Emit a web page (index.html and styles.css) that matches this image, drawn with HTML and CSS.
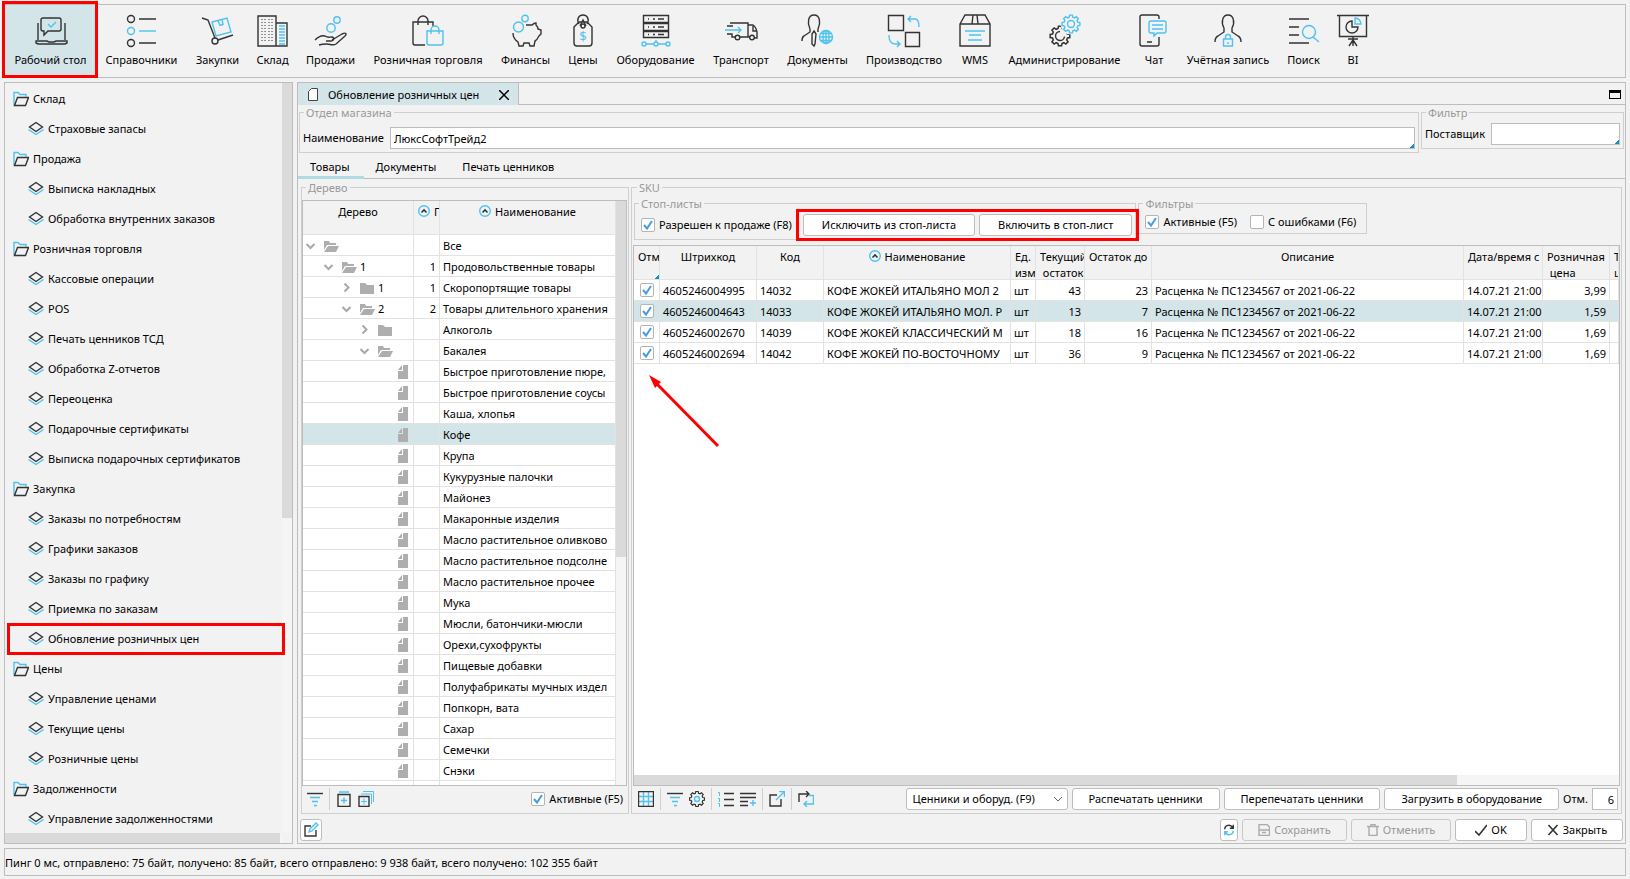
FILE: index.html
```html
<!DOCTYPE html>
<html lang="ru">
<head>
<meta charset="utf-8">
<title>Обновление розничных цен</title>
<link rel="stylesheet" href="styles.css">
</head>
<body>
<svg class="defs" aria-hidden="true">
  <symbol id="folder" viewBox="0 0 16 16"><path class="b" d="M1 14V1.500h4l2 2h6v2"/><path class="k" d="M4.500 6.500h11l-3 8h-11z"/></symbol>
  <symbol id="layers" viewBox="0 0 16 16"><path class="k" d="M8 1.500l6.500 4.500L8 10.500 1.500 6z"/><path class="b" d="M.500 8.500l7.500 5 7.500-5"/></symbol>
  <symbol id="fopen" viewBox="0 0 16 16"><path class="g" d="M1 3h5l1 2h6v2H4l-3 5zM5 8h11l-3 6H1z"/></symbol>
  <symbol id="fclosed" viewBox="0 0 16 16"><path class="g" d="M1 3h5l2 2h7v9H1z"/></symbol>
  <symbol id="file" viewBox="0 0 10 14"><path class="g" d="M5 0h5v14H0V6h5zM4 0v5H0z"/></symbol>
  <symbol id="down" viewBox="0 0 15 15"><path class="gs" d="M3.500 6l4 4 4-4"/></symbol>
  <symbol id="right" viewBox="0 0 15 15"><path class="gs" d="M5.500 3.500l4 4-4 4"/></symbol>
  <symbol id="sort" viewBox="0 0 12 12"><circle class="b" cx="6" cy="6" r="5.300"/><path class="k2" d="M3.500 7.500L6 5l2.500 2.500"/></symbol>
  <symbol id="filter" viewBox="0 0 16 16"><path class="k" d="M0 2.500h16"/><path class="b" d="M3 6.500h10M5 10.500h6M7 14.500h3"/></symbol>
  <g id="gear"><path d="M6.800-1.800L8.900-1.400V1.400L6.800 1.800 6.100 3.500 7.300 5.300 5.300 7.300 3.500 6.100 1.800 6.800 1.400 8.900H-1.400L-1.800 6.800-3.500 6.100-5.300 7.300-7.300 5.300-6.100 3.500-6.800 1.800-8.900 1.400V-1.400L-6.800-1.800-6.100-3.500-7.300-5.300-5.300-7.300-3.500-6.100-1.800-6.800-1.400-8.900H1.400L1.800-6.800 3.500-6.100 5.300-7.300 7.300-5.300 6.100-3.500z"/></g>
</svg>
<div class="app">
  <nav class="toolbar" aria-label="Разделы">
    <button class="tool selected"><svg viewBox="0 0 34 34"><path class="k" d="M4 9v17M31 9v17M9 4h16a2 2 0 0 1 2 2v9a2 2 0 0 1-2 2H14l-4 4v-4H9a2 2 0 0 1-2-2V6a2 2 0 0 1 2-2zM2 27h11l2 1h5l2-1h11v2l-2 1H4l-2-1z"/><path class="b" d="M14 10l3 3 5-5"/></svg><span>Рабочий стол</span><i class="mark"></i></button>
    <button class="tool"><svg viewBox="0 0 34 34"><circle class="k" cx="6" cy="5" r="3.500"/><circle class="b" cx="6" cy="17" r="3.500"/><circle class="k" cx="6" cy="29" r="3.500"/><path class="k" d="M14 5h17M14 29h17"/><path class="b" d="M14 17h17"/></svg><span>Справочники</span></button>
    <button class="tool"><svg viewBox="0 0 34 34"><path class="k" d="M1 4l6 2 7 18M17 26l15-5"/><circle class="k" cx="14" cy="27" r="3"/><path class="b" d="M11 8l15-4 4 14-15 4zM17 6.500l2 5 3-1-1-5"/></svg><span>Закупки</span></button>
    <button class="tool"><svg viewBox="0 0 34 34"><path class="k" d="M2 2h18v30H2zM20 9h11v23H20"/><path class="k dots" d="M6 5v24M9 5v24M13 5v24M16 5v24"/><path class="b" d="M23 12h6M23 15h6M23 18h6M23 21h6M23 24h6M23 27h6M23 30h6"/></svg><span>Склад</span></button>
    <button class="tool"><svg viewBox="0 0 34 34"><circle class="b" cx="23" cy="6" r="3.200"/><circle class="b" cx="17" cy="14" r="4.200"/><path class="k" d="M1 26c4-4 7-5 10-4 3 2 4 1 7 1 3 1 2 4-1 4h-5M18 26l10-6c4-2 5 0 3 2l-9 8c-3 2-6 0-9 0-3 0-5 0-8 1"/></svg><span>Продажи</span></button>
    <button class="tool"><svg viewBox="0 0 34 34"><path class="k" d="M14 31H4a2 2 0 0 1-2-2V8h20v4M7 11V7a4.500 4.500 0 0 1 10 0v4"/><path class="b" d="M16 17h16v12a2 2 0 0 1-2 2H18a2 2 0 0 1-2-2zM20 20v-4a4 4 0 0 1 8 0v4"/></svg><span>Розничная торговля</span></button>
    <button class="tool"><svg viewBox="0 0 34 34"><circle class="b" cx="16" cy="4.500" r="3.200"/><circle class="b" cx="9.500" cy="13" r="5"/><path class="k" d="M4 19c0 5 2 7 5 9l1 4h4l1-3h5l1 3h4l1-5c2-1 3-3 4-5l2-2v-4l-3-1c0-2-1-3-2-4v-2c-1 0-3 1-4 2h-6"/></svg><span>Финансы</span></button>
    <button class="tool"><svg viewBox="0 0 34 34"><path class="k" d="M8 13l5-5h8l5 5v16a3 3 0 0 1-3 3H11a3 3 0 0 1-3-3zM13 10c-3-5 0-9 4-9s7 4 4 9M14 12l3-6 3 6"/><circle class="k" cx="17" cy="12" r="2"/><text class="dollar" x="17" y="27">$</text></svg><span>Цены</span></button>
    <button class="tool"><svg viewBox="0 0 34 34"><path class="k" d="M4.500 1.500h25v7h-25zM4.500 9.500h25v7h-25zM4.500 17.500h25v6h-25zM9 5h1M14 5h2M19 5h6M9 13h1M14 13h2M19 13h6M9 20.500h1M14 20.500h2M19 20.500h6"/><path class="b" d="M7 30h8M19 30h8M17 26v2"/><circle class="b" cx="5" cy="30" r="2"/><circle class="b" cx="17" cy="30" r="2"/><circle class="b" cx="29" cy="30" r="2"/></svg><span>Оборудование</span></button>
    <button class="tool"><svg viewBox="0 0 34 34"><path class="k" d="M6 9h18v14h-8M3 12h6M3 20h5v3h3M24 11h5q3 2 4 7v6h-3M24 23h2M29 12v5h4"/><path class="b" d="M1 16h16M14 13l3 3-3 3"/><circle class="k" cx="13.500" cy="23.500" r="2.300"/><circle class="k" cx="28" cy="23.500" r="2.300"/></svg><span>Транспорт</span></button>
    <button class="tool"><svg viewBox="0 0 34 34"><path class="k" d="M9 15c-3-6-2-14 4-14s7 8 4 14v3M9 15v3l-6 4c-2 1-2 3-2 5M13 17l2 3-1 10-1 2-2-2V20z"/><circle class="b" cx="25" cy="23" r="6.500"/><path class="b" d="M18.500 23h13M25 16.500v13M20 19.500h10M20 26.500h10"/><ellipse class="b" cx="25" cy="23" rx="3" ry="6.500"/></svg><span>Документы</span></button>
    <button class="tool"><svg viewBox="0 0 34 34"><path class="k" d="M1.500 1.500h15v15h-15zM18.500 18.500h14v14h-14z"/><path class="b" d="M21 5h7q4 0 4 8M24 2l-3 3 3 3M2 21q0 9 6 9h5M10 27l3 3-3 3"/></svg><span>Производство</span></button>
    <button class="tool"><svg viewBox="0 0 34 34"><path class="k" d="M2 10l5-9h20l5 9v22H2zM2 10h30M15 1l-1 9M19 1l1 9"/><path class="b" d="M7 17h20M11 21h12M10 26h14"/></svg><span>WMS</span></button>
    <button class="tool"><svg viewBox="0 0 34 34"><use href="#gear" class="k" transform="translate(12 22) scale(1.100)"/><path class="k" d="M12 17.500a4.500 4.500 0 1 0 4.500 5"/><circle class="cut" cx="23" cy="10" r="10.500"/><use href="#gear" class="b" transform="translate(23 10)"/><circle class="b" cx="23" cy="10" r="3.500"/></svg><span>Администрирование</span></button>
    <button class="tool"><svg viewBox="0 0 34 34"><path class="k" d="M22 5V3a2 2 0 0 0-2-2H5a2 2 0 0 0-2 2v27a2 2 0 0 0 2 2h15a2 2 0 0 0 2-2v-7M10 28h5"/><path class="b" d="M14 7h13a2 2 0 0 1 2 2v8a2 2 0 0 1-2 2h-7l-3 3v-3h-3a2 2 0 0 1-2-2V9a2 2 0 0 1 2-2zM15 11h11M15 15h11"/></svg><span>Чат</span></button>
    <button class="tool"><svg viewBox="0 0 34 34"><path class="k" d="M13 14c-3-5-2-13 4-13s7 8 4 13v4l6 4c2 1 3 3 3 6M13 14v4l-6 4c-2 1-3 3-3 6"/><path class="b" d="M12.500 25h9v7h-9zM14.500 25v-2a2.500 2.500 0 0 1 5 0v2M17 28v2"/></svg><span>Учётная запись</span></button>
    <button class="tool"><svg viewBox="0 0 34 34"><path class="k" d="M2 5h20M2 13h10M2 21h10M2 29h20"/><circle class="b" cx="22" cy="18" r="6.500"/><path class="b" d="M26 23l6 5"/></svg><span>Поиск</span></button>
    <button class="tool"><svg viewBox="0 0 34 34"><path class="k" d="M1 1.500h32M3.500 2v20.500h27V2M17 23v9M12 25h10M17 26l-4 6M17 26l4 6M16 7a6 6 0 1 0 6 6h-6z"/><path class="b" d="M19 4v6h6a6 6 0 0 0-6-6z"/></svg><span>BI</span></button>
  </nav>

  <div class="workspace">
    <aside class="side">
      <ul class="nav">
        <li class="group"><a href="#"><svg><use href="#folder"/></svg>Склад</a></li>
        <li><a href="#"><svg><use href="#layers"/></svg>Страховые запасы</a></li>
        <li class="group"><a href="#"><svg><use href="#folder"/></svg>Продажа</a></li>
        <li><a href="#"><svg><use href="#layers"/></svg>Выписка накладных</a></li>
        <li><a href="#"><svg><use href="#layers"/></svg>Обработка внутренних заказов</a></li>
        <li class="group"><a href="#"><svg><use href="#folder"/></svg>Розничная торговля</a></li>
        <li><a href="#"><svg><use href="#layers"/></svg>Кассовые операции</a></li>
        <li><a href="#"><svg><use href="#layers"/></svg>POS</a></li>
        <li><a href="#"><svg><use href="#layers"/></svg>Печать ценников ТСД</a></li>
        <li><a href="#"><svg><use href="#layers"/></svg>Обработка Z-отчетов</a></li>
        <li><a href="#"><svg><use href="#layers"/></svg>Переоценка</a></li>
        <li><a href="#"><svg><use href="#layers"/></svg>Подарочные сертификаты</a></li>
        <li><a href="#"><svg><use href="#layers"/></svg>Выписка подарочных сертификатов</a></li>
        <li class="group"><a href="#"><svg><use href="#folder"/></svg>Закупка</a></li>
        <li><a href="#"><svg><use href="#layers"/></svg>Заказы по потребностям</a></li>
        <li><a href="#"><svg><use href="#layers"/></svg>Графики заказов</a></li>
        <li><a href="#"><svg><use href="#layers"/></svg>Заказы по графику</a></li>
        <li><a href="#"><svg><use href="#layers"/></svg>Приемка по заказам</a></li>
        <li><a href="#"><svg><use href="#layers"/></svg>Обновление розничных цен</a><i class="mark"></i></li>
        <li class="group"><a href="#"><svg><use href="#folder"/></svg>Цены</a></li>
        <li><a href="#"><svg><use href="#layers"/></svg>Управление ценами</a></li>
        <li><a href="#"><svg><use href="#layers"/></svg>Текущие цены</a></li>
        <li><a href="#"><svg><use href="#layers"/></svg>Розничные цены</a></li>
        <li class="group"><a href="#"><svg><use href="#folder"/></svg>Задолженности</a></li>
        <li><a href="#"><svg><use href="#layers"/></svg>Управление задолженностями</a></li>
      </ul>
      <div class="vbar"><div class="thumb"></div></div>
      <div class="hbar"><div class="thumb"></div></div>
    </aside>

    <main class="main">
      <div class="doctabs">
        <div class="doctab"><svg viewBox="0 0 10 13" class="page"><path d="M3.500.500h6v12h-9v-9z"/></svg><span>Обновление розничных цен</span><button class="close" aria-label="Закрыть вкладку"><svg viewBox="0 0 10 10"><path d="M0 0l10 10M10 0L0 10"/></svg></button></div>
        <button class="maximize" aria-label="Развернуть"></button>
      </div>

      <div class="head">
        <fieldset class="dept"><legend>Отдел магазина</legend><div class="field"><label for="dept">Наименование</label><input id="dept" class="pick" value="ЛюксСофтТрейд2"></div></fieldset>
        <fieldset class="supplier"><legend>Фильтр</legend><div class="field"><label for="supp">Поставщик</label><input id="supp" class="pick"></div></fieldset>
      </div>

      <div class="tabs" role="tablist">
        <button role="tab" class="active" aria-selected="true">Товары</button><button role="tab">Документы</button><button role="tab">Печать ценников</button>
      </div>

      <div class="panes">
        <fieldset class="treepane">
          <legend>Дерево</legend>
          <div class="box">
            <div class="clip">
              <table class="grid tree">
                <colgroup><col class="c-tree"><col class="c-rank"><col></colgroup>
                <thead><tr><th><div>Дерево</div></th><th><div class="left"><svg><use href="#sort"/></svg>Порядок</div></th><th><div><svg><use href="#sort"/></svg>Наименование</div></th></tr></thead>
                <tbody>
                <tr><td><div class="node l0"><svg><use href="#down"/></svg><svg class="f"><use href="#fopen"/></svg></div></td><td></td><td>Все</td></tr>
                <tr><td><div class="node l1"><svg><use href="#down"/></svg><svg class="f"><use href="#fopen"/></svg>1</div></td><td>1</td><td>Продовольственные товары</td></tr>
                <tr><td><div class="node l2"><svg><use href="#right"/></svg><svg class="f"><use href="#fclosed"/></svg>1</div></td><td>1</td><td>Скоропортящие товары</td></tr>
                <tr><td><div class="node l2"><svg><use href="#down"/></svg><svg class="f"><use href="#fopen"/></svg>2</div></td><td>2</td><td>Товары длительного хранения</td></tr>
                <tr><td><div class="node l3"><svg><use href="#right"/></svg><svg class="f"><use href="#fclosed"/></svg></div></td><td></td><td>Алкоголь</td></tr>
                <tr><td><div class="node l3"><svg><use href="#down"/></svg><svg class="f"><use href="#fopen"/></svg></div></td><td></td><td>Бакалея</td></tr>
                <tr><td><div class="node leaf"><svg><use href="#file"/></svg></div></td><td></td><td>Быстрое приготовление пюре,</td></tr>
                <tr><td><div class="node leaf"><svg><use href="#file"/></svg></div></td><td></td><td>Быстрое приготовление соусы</td></tr>
                <tr><td><div class="node leaf"><svg><use href="#file"/></svg></div></td><td></td><td>Каша, хлопья</td></tr>
                <tr class="current"><td><div class="node leaf"><svg><use href="#file"/></svg></div></td><td></td><td>Кофе</td></tr>
                <tr><td><div class="node leaf"><svg><use href="#file"/></svg></div></td><td></td><td>Крупа</td></tr>
                <tr><td><div class="node leaf"><svg><use href="#file"/></svg></div></td><td></td><td>Кукурузные палочки</td></tr>
                <tr><td><div class="node leaf"><svg><use href="#file"/></svg></div></td><td></td><td>Майонез</td></tr>
                <tr><td><div class="node leaf"><svg><use href="#file"/></svg></div></td><td></td><td>Макаронные изделия</td></tr>
                <tr><td><div class="node leaf"><svg><use href="#file"/></svg></div></td><td></td><td>Масло растительное оливково</td></tr>
                <tr><td><div class="node leaf"><svg><use href="#file"/></svg></div></td><td></td><td>Масло растительное подсолне</td></tr>
                <tr><td><div class="node leaf"><svg><use href="#file"/></svg></div></td><td></td><td>Масло растительное прочее</td></tr>
                <tr><td><div class="node leaf"><svg><use href="#file"/></svg></div></td><td></td><td>Мука</td></tr>
                <tr><td><div class="node leaf"><svg><use href="#file"/></svg></div></td><td></td><td>Мюсли, батончики-мюсли</td></tr>
                <tr><td><div class="node leaf"><svg><use href="#file"/></svg></div></td><td></td><td>Орехи,сухофрукты</td></tr>
                <tr><td><div class="node leaf"><svg><use href="#file"/></svg></div></td><td></td><td>Пищевые добавки</td></tr>
                <tr><td><div class="node leaf"><svg><use href="#file"/></svg></div></td><td></td><td>Полуфабрикаты мучных издел</td></tr>
                <tr><td><div class="node leaf"><svg><use href="#file"/></svg></div></td><td></td><td>Попкорн, вата</td></tr>
                <tr><td><div class="node leaf"><svg><use href="#file"/></svg></div></td><td></td><td>Сахар</td></tr>
                <tr><td><div class="node leaf"><svg><use href="#file"/></svg></div></td><td></td><td>Семечки</td></tr>
                <tr><td><div class="node leaf"><svg><use href="#file"/></svg></div></td><td></td><td>Снэки</td></tr>
                <tr><td><div class="node leaf"><svg><use href="#file"/></svg></div></td><td></td><td></td></tr>
                </tbody>
              </table>
            </div>
            <div class="vbar"><div class="thumb"></div></div>
          </div>
          <div class="bar">
            <button class="ic" aria-label="Отбор"><svg><use href="#filter"/></svg></button>
            <i class="sep"></i>
            <button class="ic" aria-label="Развернуть"><svg viewBox="0 0 16 16"><path class="k" d="M2 3.500h12v12H2z"/><path class="b" d="M3 1h10M5 9.500h6M8 6.500v6"/></svg></button>
            <button class="ic" aria-label="Развернуть все"><svg viewBox="0 0 16 16"><path class="k" d="M1 5.500h10v10H1z"/><path class="b thin" d="M3 3h10.500v10M5 .500h10.500V11M3 10.500h6M6 7.500v6"/></svg></button>
            <label class="check push"><input type="checkbox" checked>Активные (F5)</label>
          </div>
        </fieldset>

        <fieldset class="skupane">
          <legend>SKU</legend>
          <div class="filters">
            <fieldset><legend>Стоп-листы</legend>
              <div class="row stop"><label class="check"><input type="checkbox" checked>Разрешен к продаже (F8)</label>
              <div class="pair"><button class="btn">Исключить из стоп-листа</button><button class="btn">Включить в стоп-лист</button><i class="mark"></i></div></div>
            </fieldset>
            <fieldset><legend>Фильтры</legend>
              <div class="row flags"><label class="check"><input type="checkbox" checked>Активные (F5)</label><label class="check"><input type="checkbox">С ошибками (F6)</label></div>
            </fieldset>
          </div>
          <div class="box sku">
            <div class="clip">
              <table class="grid goods">
                <colgroup><col class="w26"><col class="w97"><col class="w67"><col class="w187"><col class="w25"><col class="w49"><col class="w67"><col><col class="w79"><col class="w67"><col class="w9"></colgroup>
                <thead><tr><th><div class="left pick">Отм.</div></th><th><div>Штрихкод</div></th><th><div>Код</div></th><th><div><svg><use href="#sort"/></svg>Наименование</div></th><th><div class="left">Ед.<br>изм.</div></th><th><div class="left">Текущий<br>&nbsp;остаток</div></th><th><div class="left">Остаток до</div></th><th><div>Описание</div></th><th><div class="left">Дата/время с</div></th><th><div class="left">Розничная<br>&nbsp;цена</div></th><th><div class="left">Т<br>ц</div></th></tr></thead>
                <tbody>
                <tr><td><input type="checkbox" checked aria-label="Отметить 14032"></td><td>4605246004995</td><td>14032</td><td>КОФЕ ЖОКЕЙ ИТАЛЬЯНО МОЛ 2</td><td>шт</td><td class="num">43</td><td class="num">23</td><td>Расценка № ПС1234567 от 2021-06-22</td><td>14.07.21 21:00</td><td class="num">3,99</td><td></td></tr>
                <tr class="current"><td><input type="checkbox" checked aria-label="Отметить 14033"></td><td>4605246004643</td><td>14033</td><td>КОФЕ ЖОКЕЙ ИТАЛЬЯНО МОЛ. Р</td><td>шт</td><td class="num">13</td><td class="num">7</td><td>Расценка № ПС1234567 от 2021-06-22</td><td>14.07.21 21:00</td><td class="num">1,59</td><td></td></tr>
                <tr><td><input type="checkbox" checked aria-label="Отметить 14039"></td><td>4605246002670</td><td>14039</td><td>КОФЕ ЖОКЕЙ КЛАССИЧЕСКИЙ М</td><td>шт</td><td class="num">18</td><td class="num">16</td><td>Расценка № ПС1234567 от 2021-06-22</td><td>14.07.21 21:00</td><td class="num">1,69</td><td></td></tr>
                <tr><td><input type="checkbox" checked aria-label="Отметить 14042"></td><td>4605246002694</td><td>14042</td><td>КОФЕ ЖОКЕЙ ПО-ВОСТОЧНОМУ</td><td>шт</td><td class="num">36</td><td class="num">9</td><td>Расценка № ПС1234567 от 2021-06-22</td><td>14.07.21 21:00</td><td class="num">1,69</td><td></td></tr>
                </tbody>
              </table>
              <svg class="arrow" viewBox="0 0 74 76"><path d="M9 10l61 62" stroke="#f00" stroke-width="3"/><path d="M1 1l12 7-6 6z" fill="#f00"/></svg>
            </div>
            <div class="hbar"><div class="thumb"></div></div>
          </div>
          <div class="bar">
            <button class="ic" aria-label="Таблица"><svg viewBox="0 0 16 16"><path class="b" d="M5.500 1v14M10.500 1v14M1 5.500h14M1 10.500h14"/><path class="k" d="M.500.500h15v15H.500z"/></svg></button>
            <i class="sep"></i>
            <button class="ic" aria-label="Отбор"><svg><use href="#filter"/></svg></button>
            <button class="ic" aria-label="Настройка"><svg viewBox="0 0 16 16"><use href="#gear" class="k" transform="translate(8 8) scale(.850)"/><circle class="b" cx="8" cy="8" r="2.500"/></svg></button>
            <i class="sep"></i>
            <button class="ic" aria-label="Нумерация"><svg viewBox="0 0 16 16"><path class="k" d="M6 2.500h10M6 8.500h10M6 14.500h10"/><path class="b thin" d="M0 1.500h1.500V5M0 7.500h1.500V11M0 12.500h1.500V16"/></svg></button>
            <button class="ic" aria-label="Добавить строки"><svg viewBox="0 0 16 16"><path class="k" d="M0 2.500h16M0 6.500h16M0 10.500h8M0 14.500h8"/><path class="b" d="M10 12h6M13 9v6"/></svg></button>
            <i class="sep"></i>
            <button class="ic" aria-label="Открыть"><svg viewBox="0 0 16 16"><path class="k" d="M8 4H1v11h11V8"/><path class="b" d="M7 9l8-8M10 .500h5.500V6"/></svg></button>
            <i class="sep"></i>
            <button class="ic" aria-label="Обмен"><svg viewBox="0 0 16 16"><path class="k" d="M1 11V3h10M8 0l3 3-3 3"/><path class="b" d="M11 4.500h4.500V13H6M9 10l-3 3 3 3"/></svg></button>
            <div class="actions push">
              <span class="combo"><select aria-label="Ценники и оборудование"><option>Ценники и оборуд. (F9)</option></select><svg viewBox="0 0 10 6"><path d="M1 1l4 4 4-4"/></svg></span>
              <button class="btn">Распечатать ценники</button>
              <button class="btn">Перепечатать ценники</button>
              <button class="btn">Загрузить в оборудование</button>
              <label for="cnt">Отм.</label><input id="cnt" class="cnt" value="6">
            </div>
          </div>
        </fieldset>
      </div>

      <div class="footer">
        <button class="btn square" aria-label="Изменить"><svg viewBox="0 0 16 16"><path class="k" d="M8 4H2v10h11V8"/><path class="b" d="M6 10l1-3 6-6 2 2-6 6z"/></svg></button>
        <button class="btn refresh push" aria-label="Обновить"><svg viewBox="0 0 14 14"><path class="k2" d="M2 6c0-5 7-6 9-2M12 1v4H8"/><path class="b2" d="M12 8c0 5-7 6-9 2M2 13V9h4"/></svg></button>
        <button class="btn w105" disabled><svg viewBox="0 0 12 12"><path class="gx" d="M1 .500h8l2.500 2.500v8.500H1zM1 6h10M4 8.500h4"/></svg>Сохранить</button>
        <button class="btn w100" disabled><svg viewBox="0 0 12 12"><path class="gx" d="M0 2.500h12M4 2V.500h4V2M2 3v8.500h8V3"/></svg>Отменить</button>
        <button class="btn w72"><svg viewBox="0 0 12 12"><path class="k2" d="M0 7l4 4 8-10"/></svg>OK</button>
        <button class="btn w92"><svg viewBox="0 0 12 12"><path class="k2" d="M1.500 1l9 10M10.500 1l-9 10"/></svg>Закрыть</button>
      </div>
    </main>
  </div>

  <div class="status">Пинг 0 мс, отправлено: 75 байт, получено: 85 байт, всего отправлено: 9 938 байт, всего получено: 102 355 байт</div>
</div>
</body>
</html>
```
FILE: styles.css
```css
* { box-sizing: border-box; }
body {
  margin: 0;
  background: #f2f2f2;
  color: #000;
  font: 11px/16px "Noto Sans", "Open Sans", sans-serif;
}
button, input, select { font: inherit; color: inherit; margin: 0; }
button { padding: 0; border: 0; background: none; white-space: nowrap; }
a { color: inherit; text-decoration: none; }
fieldset { margin: 0; padding: 0; border: 1px solid #cfcfcf; min-width: 0; }
legend { margin-left: 4px; padding: 0 2px; line-height: 15px; color: #999; }
svg { display: block; flex: none; fill: none; }
.defs { position: absolute; width: 0; height: 0; }

/* icon strokes */
.k, .k2 { stroke: #333; stroke-width: 1.4; fill: none; }
.b, .b2 { stroke: #4ec3f0; stroke-width: 1.4; fill: none; }
.k2, .b2 { stroke-width: 1.6; }
.thin { stroke-width: 1; }
.g { fill: #aeaeae; }
.gs { stroke: #a8a8a8; stroke-width: 2; }
.gx { stroke: #aaa; stroke-width: 1.4; }
.dots { stroke-width: 1; stroke-dasharray: 1 2; }
.cut { fill: #f2f2f2; }
.dollar { fill: #4ec3f0; font-size: 13px; text-anchor: middle; }

/* red callouts */
.mark {
  position: absolute;
  z-index: 1;
  inset: -4px -2px -1px -3px;
  border: 3px solid #f00;
  pointer-events: none;
}

.app {
  display: flex;
  flex-direction: column;
  gap: 4px;
  height: 100vh;
  padding: 4px 4px 3px;
}

.toolbar {
  display: grid;
  grid-template-columns: 91px 91px 61px 49px 67px 128px 67px 48px 97px 74px 79px 94px 48px 131px 48px 100px 51px 48px;
  flex: none;
  height: 74px;
  border: 1px solid #bdbdbd;
}
.tool {
  position: relative;
  display: flex;
  flex-direction: column;
  align-items: center;
  gap: 4px;
  padding-top: 9px;
}
.tool svg { width: 34px; height: 34px; }
.selected { background: #d3e5e9; }

.workspace { display: flex; flex: 1; gap: 4px; min-height: 0; }

.side {
  display: grid;
  grid-template: minmax(0, 1fr) 10px / minmax(0, 1fr) 10px;
  flex: none;
  width: 289px;
  border: 1px solid #bdbdbd;
  overflow: hidden;
}
.nav { margin: 0; padding: 1px 0 0; list-style: none; }
.nav li { position: relative; height: 30px; padding-left: 23px; }
.nav .group { padding-left: 8px; }
.nav a { display: flex; align-items: center; gap: 4px; height: 30px; }
.nav svg { width: 16px; height: 16px; }
.nav .mark { inset: -1px -3px -1px 2px; }
.vbar, .hbar { background: #f5f5f5; }
.vbar { width: 10px; }
.hbar { height: 10px; }
.thumb { height: 100%; background: #dadada; }
.side .vbar .thumb { height: 58%; }

.main {
  display: flex;
  flex: 1;
  flex-direction: column;
  min-width: 0;
  border: 1px solid #bdbdbd;
}
.doctabs { display: flex; justify-content: space-between; flex: none; height: 22px; border-bottom: 1px solid #bdbdbd; }
.doctab {
  display: flex;
  align-items: center;
  gap: 10px;
  padding: 1px 9px 0 10px;
  margin-bottom: -1px;
  border-right: 1px solid #bdbdbd;
  background: #d3e5e9;
}
.page { width: 10px; height: 13px; }
.page path { fill: #fff; stroke: #444; }
.doctab .close { margin-left: 10px; }
.close svg { width: 10px; height: 10px; }
.close path { stroke: #000; stroke-width: 1.5; }
.maximize { align-self: center; width: 12px; height: 9px; margin: 2px 4px 0 0; border: 1px solid #000; border-top-width: 3px; }

.head { display: flex; align-items: flex-start; gap: 2px; padding: 0 1px; }
.dept { flex: 1; }
.dept .field { padding: 7px 3px 3px; }
.supplier { width: 203px; }
.supplier .field { padding: 3px; }
.field { display: flex; align-items: center; gap: 6px; }
.field input { flex: 1; min-width: 0; height: 22px; padding: 0 3px; border: 1px solid #bdbdbd; background-color: #fff; }
.pick { background: linear-gradient(135deg, transparent 50%, #0d8fc4 50%) right bottom / 4px 4px no-repeat; }

.tabs { display: flex; flex: none; height: 26px; border-bottom: 1px solid #bdbdbd; }
.tabs button { height: 26px; padding: 4px 14px 0 12px; border-bottom: 3px solid transparent; }
.tabs .active { border-bottom-color: #b0dbe2; }

.panes { display: flex; flex: 1; gap: 2px; min-height: 0; padding: 1px 3px 0; }
.treepane, .skupane { display: flex; flex-direction: column; }
.treepane { width: 328px; padding: 5px 1px 0 0; }
.skupane { flex: 1; padding: 1px 1px 0; }
.box { display: flex; flex: 1; min-height: 0; border: 1px solid #bdbdbd; }
.sku { flex-direction: column; background: #fff; margin-top: 5px; }
.clip { position: relative; flex: 1; min-width: 0; min-height: 0; overflow: hidden; }
.treepane .thumb { height: 61%; }
.skupane .thumb { width: 83.6%; }
.side .hbar .thumb { width: 275px; }

.grid { width: 100%; border-collapse: separate; border-spacing: 0; table-layout: fixed; }
.grid th { height: 34px; padding: 0; border: solid #e2e2e2; border-width: 0 1px 1px 0; background: #f2f2f2; font-weight: 400; vertical-align: top; }
.grid th div { height: 33px; padding-top: 3px; overflow: hidden; white-space: nowrap; }
.grid th .left { padding-left: 4px; text-align: left; }
.grid th svg { display: inline-block; width: 12px; height: 12px; margin-right: 4px; vertical-align: -1px; }
.grid td { height: 21px; padding: 1px 3px 0; border: solid #e2e2e2; border-width: 0 1px 1px 0; background: #fff; line-height: 18px; white-space: nowrap; overflow: hidden; }
.grid .current td { background: #d3e5e9; }
.grid .num { text-align: right; }
.tree td:first-child { padding: 1px 0 0; }
.tree td:nth-child(2) { text-align: right; }
.c-tree { width: 111px; }
.c-rank { width: 26px; }
.node { display: flex; align-items: center; height: 18px; }
.node svg { width: 15px; height: 15px; }
.node .f { width: 16px; height: 16px; margin: 0 3px 0 5px; }
.node.leaf svg { width: 10px; height: 14px; }
.l1 { padding-left: 18px; }
.l2 { padding-left: 36px; }
.l3 { padding-left: 54px; }
.leaf { padding-left: 95px; }
.w9 { width: 9px; }
.w25 { width: 25px; }
.w26 { width: 26px; }
.w49 { width: 49px; }
.w67 { width: 67px; }
.w79 { width: 79px; }
.w97 { width: 97px; }
.w187 { width: 187px; }
.goods td:first-child { padding: 0 6px; }
.arrow { position: absolute; left: 14px; top: 128px; width: 74px; height: 76px; }

input[type="checkbox"] {
  display: block;
  flex: none;
  width: 14px;
  height: 14px;
  border: 1px solid #b4b4b4;
  border-radius: 2px;
  background: #fff;
  appearance: none;
}
input[type="checkbox"]:checked {
  background: #fff url("data:image/svg+xml,%3Csvg xmlns='http://www.w3.org/2000/svg' viewBox='0 0 12 12'%3E%3Cpath d='M2 6l3 3.500L10 2' fill='none' stroke='%23479de0' stroke-width='2'/%3E%3C/svg%3E") center / 12px no-repeat;
}
.check { display: flex; align-items: center; gap: 4px; white-space: nowrap; }

.filters { display: flex; align-items: flex-start; gap: 2px; padding-left: 1px; }
.row { display: flex; align-items: center; }
.stop { gap: 11px; padding: 3px 3px 3px 6px; }
.flags { gap: 13px; padding: 3px 10px 3px 6px; }
.pair { position: relative; display: flex; gap: 4px; }
.pair .mark { inset: -5px -7px; }
.btn {
  display: flex;
  align-items: center;
  justify-content: center;
  gap: 4px;
  height: 22px;
  padding: 0 16px;
  border: 1px solid #bdbdbd;
  border-radius: 3px;
  background: #fff;
}
.pair .btn { padding: 0 18px; }
.btn:disabled { background: #f2f2f2; border-color: #c8c8c8; color: #999; }

.bar { display: flex; align-items: center; flex: none; height: 27px; gap: 6px; padding: 0 4px 1px 5px; }
.ic svg { width: 16px; height: 16px; }
.sep { width: 1px; height: 22px; background: #cfcfcf; }
.push { margin-left: auto; }
.skupane .bar { padding-right: 2px; }
.actions { display: flex; align-items: center; gap: 4px; }
.combo { display: grid; align-items: center; }
.combo > * { grid-area: 1 / 1; }
.combo select { width: 162px; height: 22px; padding: 0 6px; border: 1px solid #bdbdbd; border-radius: 3px; background: #fff; appearance: none; }
.combo svg { justify-self: end; width: 10px; height: 6px; margin-right: 5px; pointer-events: none; stroke: #666; }
.cnt { width: 26px; height: 22px; padding: 0 3px; border: 1px solid #bdbdbd; background: #fff; text-align: right; }

.footer { display: flex; flex: none; gap: 4px; padding: 5px 2px 2px; }
.footer .btn { padding: 0; }
.footer svg { width: 12px; height: 12px; }
.footer .square svg { width: 16px; height: 16px; }
.footer .square { width: 22px; }
.footer .refresh { width: 18px; }
.footer .w72 { width: 72px; }
.footer .w92 { width: 92px; }
.footer .w100 { width: 100px; }
.footer .w105 { width: 105px; }

.status { flex: none; height: 28px; padding: 0; border: 1px solid #bdbdbd; line-height: 28px; }
```
